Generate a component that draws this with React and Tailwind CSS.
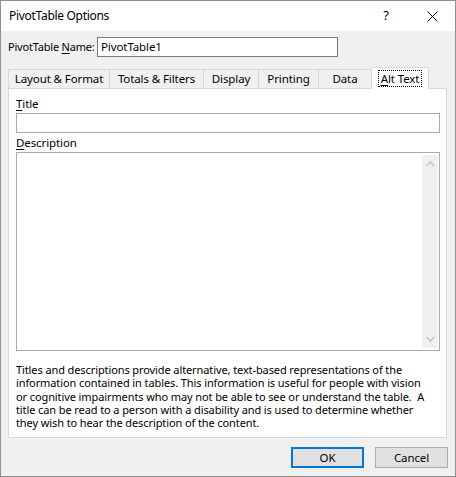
import React from "react";

const font = { fontFamily: '"Noto Sans", "Open Sans", sans-serif' };

function Tab({ children, w, selected, last }) {
  if (selected) {
    return (
      <div
        className="h-[22px] bg-white border border-b-0 border-[#d9d9d9] flex items-start justify-center pt-[2px] relative z-10 -mb-px"
        style={{ width: w }}
      >
        <span className="border border-dotted border-black px-[2px] h-[17px] flex items-center">{children}</span>
      </div>
    );
  }
  return (
    <div
      className={`h-[19px] bg-[#f0f0f0] border-t border-l border-[#d9d9d9] ${last ? "border-r" : ""} flex items-center justify-center`}
      style={{ width: w }}
    >
      {children}
    </div>
  );
}

function U({ children }) {
  return <span className="underline underline-offset-[2px]">{children}</span>;
}

const lines = [
  "Titles and descriptions provide alternative, text-based representations of the",
  "information contained in tables. This information is useful for people with vision",
  "or cognitive impairments who may not be able to see or understand the table.\u00a0 A",
  "title can be read to a person with a disability and is used to determine whether",
  "they wish to hear the description of the content.",
];

export default function App() {
  return (
    <div
      className="w-[456px] h-[477px] bg-[#f0f0f0] border border-[#8f8f8f] flex flex-col text-[11.5px] tracking-[-0.1px] text-black overflow-hidden"
      style={font}
    >
      {/* title bar */}
      <div className="h-[30px] bg-white flex items-center shrink-0">
        <div className="pl-[8px] flex-1 text-[12px] tracking-[-0.3px]">PivotTable Options</div>
        <div className="w-[46px] flex justify-center text-[13px]">?</div>
        <div className="w-[46px] flex justify-center">
          <svg width="11" height="11" viewBox="0 0 11 11">
            <path d="M0.5 0.5 L10.5 10.5 M10.5 0.5 L0.5 10.5" stroke="#000" strokeWidth="1" />
          </svg>
        </div>
      </div>

      <div className="px-[7px] flex flex-col flex-1">
        {/* name row */}
        <div className="flex items-center mt-[6px] h-[20px]">
          <span className="w-[89px] shrink-0 whitespace-nowrap text-[11px] tracking-[-0.2px]">
            PivotTable <U>N</U>ame:
          </span>
          <div className="w-[241px] h-[20px] bg-white border border-[#7a7a7a] flex items-center pl-[3px]">
            PivotTable1
          </div>
        </div>

        {/* tabs */}
        <div className="flex items-end mt-[9px] h-[22px] whitespace-nowrap">
          <Tab w={101}>Layout &amp; Format</Tab>
          <Tab w={94}>Totals &amp; Filters</Tab>
          <Tab w={55}>Display</Tab>
          <Tab w={60}>Printing</Tab>
          <Tab w={53}>Data</Tab>
          <Tab w={58} selected>
            <U>A</U>lt Text
          </Tab>
        </div>

        {/* panel */}
        <div className="w-[439px] h-[350px] bg-white border border-[#d9d9d9] flex flex-col px-[7px]">
          <div className="mt-[7px] leading-[16px]">
            <U>T</U>itle
          </div>
          <div className="mt-[1px] h-[20px] w-[424px] border border-[#ababab]" />
          <div className="mt-[2px] leading-[16px]">
            <U>D</U>escription
          </div>
          <div className="mt-[1px] h-[199px] w-[424px] border border-[#ababab] flex justify-end p-[2px] pr-[1px]">
            <div className="w-[16px] h-full bg-[#f0f0f0] flex flex-col justify-between items-center py-[6px]">
              <svg width="9" height="6" viewBox="0 0 9 6">
                <path d="M0.5 5 L4.5 1 L8.5 5" stroke="#c2c2c2" strokeWidth="1.5" fill="none" />
              </svg>
              <svg width="9" height="6" viewBox="0 0 9 6">
                <path d="M0.5 1 L4.5 5 L8.5 1" stroke="#c2c2c2" strokeWidth="1.5" fill="none" />
              </svg>
            </div>
          </div>
          <div className="mt-[12px] text-[11px] tracking-[-0.1px] whitespace-nowrap flex flex-col">
            {lines.map((l, i) => (
              <div key={i} className="h-[13.25px] leading-[13.25px]">
                {l}
              </div>
            ))}
          </div>
        </div>

        {/* buttons */}
        <div className="flex justify-end gap-[11px] mt-[9px]">
          <div className="w-[73px] h-[21px] border-2 border-[#0078d7] bg-[#e1e1e1] flex items-center justify-center">
            OK
          </div>
          <div className="w-[73px] h-[21px] border border-[#adadad] bg-[#e1e1e1] flex items-center justify-center">
            Cancel
          </div>
        </div>
      </div>
    </div>
  );
}
